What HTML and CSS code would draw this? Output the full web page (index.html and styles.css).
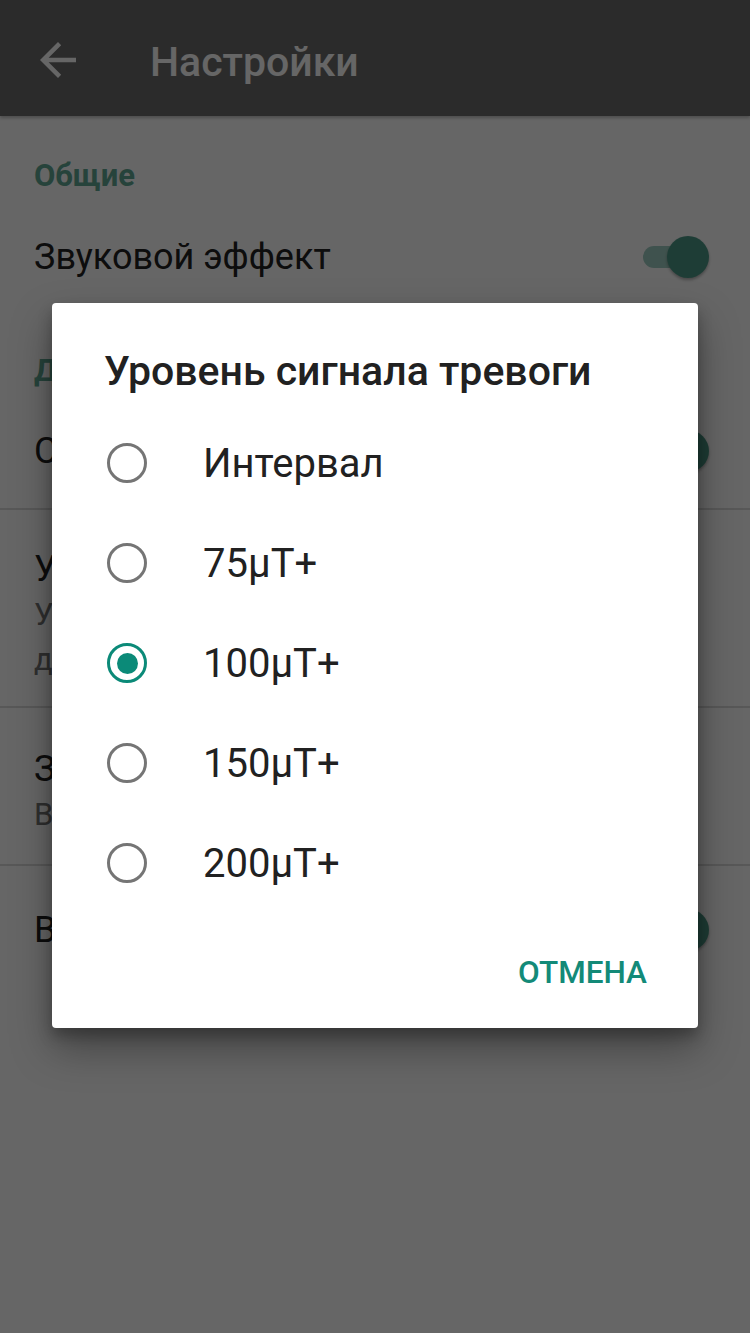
FILE: index.html
```html
<!DOCTYPE html>
<html lang="ru">
<head>
<meta charset="utf-8">
<title>Настройки</title>
<link rel="stylesheet" href="styles.css">
</head>
<body>
<div class="screen">
  <header class="appbar">
    <svg class="back" viewBox="0 0 24 24" width="54" height="54"><path d="M20 11H7.83l5.59-5.59L12 4l-8 8 8 8 1.41-1.41L7.83 13H20v-2z" fill="#fff"/></svg>
    <h1 class="appbar-title">Настройки</h1>
  </header>
  <main class="prefs">
    <div class="cat cat-first">Общие</div>
    <div class="pref pref-switch pref-sound">
      <div class="pref-title">Звуковой эффект</div>
      <span class="switch"><span class="thumb"></span></span>
    </div>
    <div class="cat cat-second">Детектор</div>
    <div class="pref pref-switch pref-alarm pref-div">
      <div class="pref-title">Сигнал тревоги</div>
      <span class="switch"><span class="thumb"></span></span>
    </div>
    <div class="pref pref-tall pref-div">
      <div class="pref-title">Уровень сигнала</div>
      <div class="pref-sub">Уровень поля</div>
      <div class="pref-sub">для сигнала</div>
    </div>
    <div class="pref pref-mid pref-div">
      <div class="pref-title">Звук сигнала</div>
      <div class="pref-sub">Выбор звука</div>
    </div>
    <div class="pref pref-switch pref-last">
      <div class="pref-title">Вибрация</div>
      <span class="switch"><span class="thumb"></span></span>
    </div>
  </main>
  <div class="scrim"></div>
  <div class="dialog">
    <h2 class="dialog-title">Уровень сигнала тревоги</h2>
    <ul class="options">
      <li class="option"><span class="radio"></span><span class="opt-label">Интервал</span></li>
      <li class="option"><span class="radio"></span><span class="opt-label">75µT+</span></li>
      <li class="option"><span class="radio radio-on"></span><span class="opt-label">100µT+</span></li>
      <li class="option"><span class="radio"></span><span class="opt-label">150µT+</span></li>
      <li class="option"><span class="radio"></span><span class="opt-label">200µT+</span></li>
    </ul>
    <div class="actions"><span class="btn">ОТМЕНА</span></div>
  </div>
</div>
</body>
</html>
```
FILE: styles.css
```css
* { box-sizing: border-box; }
html, body { margin: 0; padding: 0; }
body {
  font-family: Roboto, "Noto Sans", "Liberation Sans", sans-serif;
  background: #fff;
}
.screen {
  position: relative;
  width: 750px;
  height: 1333px;
  overflow: hidden;
  background: #fff;
}
.appbar {
  height: 116px;
  background: #6c6c6c;
  display: flex;
  align-items: center;
  padding-left: 31px;
  box-shadow: 0 2px 3px rgba(0,0,0,0.25);
  position: relative;
  z-index: 1;
}
.back { display: block; margin-top: 4px; }
.appbar-title {
  margin: 8px 0 0 65px;
  font-size: 41px;
  font-weight: 500;
  color: #fff;
  line-height: 1;
}
.prefs { display: flex; flex-direction: column; }
.cat {
  padding-left: 34px;
  font-size: 31px;
  font-weight: 700;
  color: #5fa893;
  height: 64px;
  display: flex;
  align-items: center;
}
.cat-first { margin-top: 27px; }
.cat-second { margin-top: 31px; }
.pref {
  padding: 0 34px;
  display: flex;
  flex-direction: column;
  justify-content: flex-start;
}
.pref-switch {
  flex-direction: row;
  align-items: center;
  justify-content: space-between;
}
.pref-sound { height: 100px; }
.pref-alarm { height: 108px; padding-bottom: 8px; }
.pref-div { border-bottom: 2px solid #ddd; }
.pref-title { font-size: 36px; color: #212121; line-height: 45px; }
.pref-sub { font-size: 31px; color: #757575; line-height: 45px; }
.pref-tall { height: 198px; padding-top: 37px; }
.pref-mid { height: 158px; padding-top: 39px; }
.pref-last { height: 128px; }
.switch {
  position: relative;
  width: 57px;
  height: 22px;
  border-radius: 11px;
  background: #9fcdc2;
  margin-right: 16px;
  flex: none;
}
.thumb {
  position: absolute;
  right: -9px;
  top: -10px;
  width: 42px;
  height: 42px;
  border-radius: 50%;
  background: #4c9a88;
  box-shadow: 0 2px 3px rgba(0,0,0,0.3);
}
.scrim {
  position: absolute;
  inset: 0;
  background: rgba(0,0,0,0.6);
  z-index: 2;
}
.dialog {
  position: absolute;
  z-index: 3;
  left: 52px;
  top: 303px;
  width: 646px;
  height: 725px;
  background: #fff;
  border-radius: 4px;
  box-shadow: 0 20px 40px rgba(0,0,0,0.35), 0 8px 14px rgba(0,0,0,0.25);
  display: flex;
  flex-direction: column;
}
.dialog-title {
  margin: 0;
  padding: 46px 0 0 52px;
  height: 110px;
  font-size: 41px;
  font-weight: 500;
  line-height: 44px;
  color: #212121;
}
.options { list-style: none; margin: 0; padding: 0; }
.option {
  height: 100px;
  display: flex;
  align-items: center;
  padding-left: 55px;
}
.radio {
  width: 40px;
  height: 40px;
  border-radius: 50%;
  border: 3.5px solid #757575;
  display: flex;
  align-items: center;
  justify-content: center;
  flex: none;
}
.radio-on { border-color: #0b8a78; }
.radio-on::after {
  content: "";
  width: 21px;
  height: 21px;
  border-radius: 50%;
  background: #0b8a78;
}
.opt-label {
  margin-left: 56px;
  font-size: 40px;
  color: #212121;
}
.actions {
  display: flex;
  justify-content: flex-end;
  padding: 23px 51px 0 0;
}
.btn {
  font-size: 31.5px;
  font-weight: 500;
  color: #138a78;
  height: 72px;
  display: flex;
  align-items: center;
}
```
